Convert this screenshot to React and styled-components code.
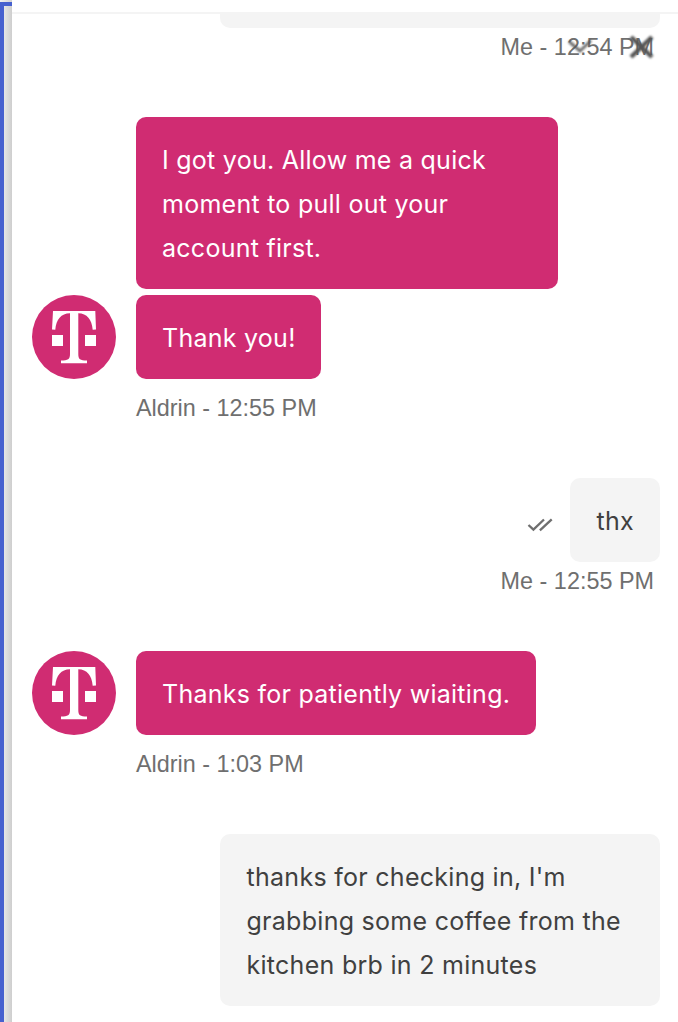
import React from "react";
import styled, { createGlobalStyle } from "styled-components";

const GlobalStyle = createGlobalStyle`
  * { box-sizing: border-box; }
  body { margin: 0; background: #fff; overflow: hidden; }
`;

const Page = styled.div`
  display: flex;
  width: 678px;
  height: 1022px;
  overflow: hidden;
  background: #fff;
`;

const Edge = styled.div`
  flex: none;
  display: flex;
  flex-direction: column;
  width: 12px;
  padding-top: 2px;
  background: linear-gradient(90deg, #f1f1f1, #d3d3d3);
`;

const EdgeTop = styled.div`
  height: 4px;
  background: #4761cf;
`;

const EdgeSide = styled.div`
  flex: 1;
  border-left: 4px solid #4761cf;
  background: linear-gradient(90deg, #e6e6e6, #cecece);
`;

const Chat = styled.main`
  flex: 1;
  display: flex;
  flex-direction: column;
  margin-top: 12px;
  padding: 0 18px 0 20px;
  background: linear-gradient(#f4f4f4, #f4f4f4) 0 0 / 100% 2px no-repeat;
`;

const Group = styled.section`
  display: flex;
  flex-direction: column;
  margin-top: ${(p) => p.$gap || 0}px;
`;

const Row = styled.div`
  display: flex;
  align-items: center;
  justify-content: ${(p) => (p.$mine ? "flex-end" : "flex-start")};
  margin-bottom: 6px;
`;

const AvatarSlot = styled.div`
  width: 84px;
  height: 84px;
  margin-right: 20px;
  flex: none;
  align-self: flex-end;

  svg { display: block; }
`;

const Bubble = styled.div`
  width: ${(p) => p.$width}px;
  padding: 21px 20px 19px ${(p) => (p.$mine ? 26.5 : 26)}px;
  border-radius: 10px;
  font: 400 25px/44px Inter, "Liberation Sans", sans-serif;
  letter-spacing: ${(p) => (p.$mine ? 0.28 : 0.26)}px;
  color: ${(p) => (p.$mine ? "#404040" : "#fff")};
  background: ${(p) => (p.$mine ? "#f4f4f4" : "#d02c72")};
`;

const BubbleTail = styled.div`
  width: 440px;
  height: 16px;
  align-self: flex-end;
  border-radius: 0 0 10px 10px;
  background: #f4f4f4;
`;

const Meta = styled.div`
  height: 28px;
  margin-top: ${(p) => p.$top}px;
  padding: ${(p) => (p.$mine ? "0 6px 0 0" : "0 0 0 104px")};
  text-align: ${(p) => (p.$mine ? "right" : "left")};
  font: 400 23.4px/28px "Liberation Sans", Arial, sans-serif;
  color: #6f6f6f;
`;

const Controls = styled.div`
  position: absolute;
  top: 32px;
  left: 566px;
  display: flex;

  svg { display: block; filter: blur(1px); }
`;

const Ticks = styled.svg`
  margin: 10px 17px 0 0;
`;

function Avatar() {
  return (
    <svg width="84" height="84" viewBox="0 0 84 84">
      <circle cx="42" cy="42" r="42" fill="#d02c72" />
      <g fill="#fff">
        <path d="M21 16H63.3L64 34.4L60.7 34.8C59.8 24.5 55 18.5 46.3 18.3V59C46.3 64.4 48 65.4 55 65.6V68.2H29V65.6C36 65.4 38 64.4 38 59V18.3C29 18.5 24.2 24.5 23.3 34.8L20 34.4Z" />
        <path d="M20 40H31V51H20ZM53 40H64V51H53Z" />
      </g>
    </svg>
  );
}

function DoubleCheck() {
  return (
    <Ticks width="26" height="16" viewBox="0 0 26 16" fill="none" stroke="#6f6f6f" strokeWidth="2.3">
      <path d="M1.5 8L6.4 12.7L17 2.5" />
      <path d="M12.9 13.3L24.7 2.3" />
    </Ticks>
  );
}

export default function App() {
  return (
    <>
      <GlobalStyle />
      <Page>
        <Edge>
          <EdgeTop />
          <EdgeSide />
        </Edge>
        <Chat>
          <Group>
            <BubbleTail />
            <Meta $mine $top={5}>Me - 12:54 PM</Meta>
          </Group>

          <Group $gap={56}>
            <Row>
              <AvatarSlot />
              <Bubble $width={422}>I got you. Allow me a quick moment to pull out your account first.</Bubble>
            </Row>
            <Row>
              <AvatarSlot><Avatar /></AvatarSlot>
              <Bubble $width={185}>Thank you!</Bubble>
            </Row>
            <Meta $top={9}>Aldrin - 12:55 PM</Meta>
          </Group>

          <Group $gap={56}>
            <Row $mine>
              <DoubleCheck />
              <Bubble $mine $width={90}>thx</Bubble>
            </Row>
            <Meta $mine $top={-1}>Me - 12:55 PM</Meta>
          </Group>

          <Group $gap={56}>
            <Row>
              <AvatarSlot><Avatar /></AvatarSlot>
              <Bubble $width={400}>Thanks for patiently wiaiting.</Bubble>
            </Row>
            <Meta $top={9}>Aldrin - 1:03 PM</Meta>
          </Group>

          <Group $gap={56}>
            <Row $mine>
              <Bubble $mine $width={440}>thanks for checking in, I'm grabbing some coffee from the kitchen brb in 2 minutes</Bubble>
            </Row>
          </Group>
        </Chat>
      </Page>
      <Controls>
        <svg width="60" height="30" viewBox="0 0 60 30" fill="none" stroke="#555">
          <path d="M3 9.5L14 19L25 8.5" strokeWidth="3" opacity="0.85" />
        </svg>
        <svg width="32" height="30" viewBox="0 0 32 30" fill="none" stroke="#555">
          <path d="M5 5L26 25M26 5L5 25" strokeWidth="4.4" />
        </svg>
      </Controls>
    </>
  );
}
